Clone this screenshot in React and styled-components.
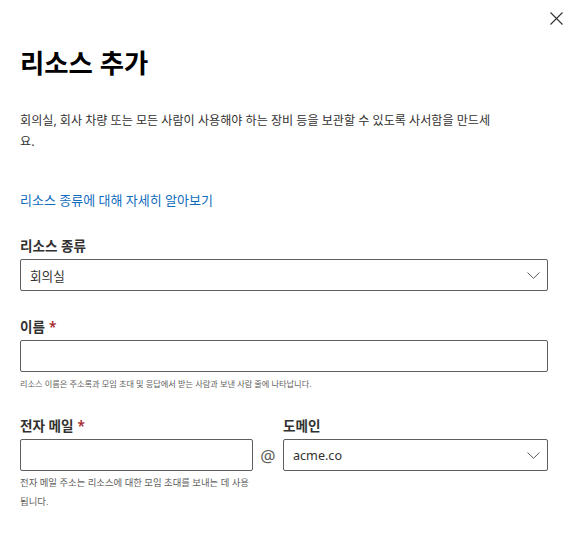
import React from 'react';
import styled, { createGlobalStyle } from 'styled-components';

const GlobalStyle = createGlobalStyle`
  * { box-sizing: border-box; }
  body {
    margin: 0;
    background: #fff;
    font-family: "Noto Sans", "Noto Sans CJK KR", sans-serif;
    color: #323130;
  }
`;

const Panel = styled.div`
  width: 571px;
  min-height: 534px;
  background: #fff;
`;

const CloseRow = styled.div`
  display: flex;
  justify-content: flex-end;
  padding-top: 3px;
`;

const CloseButton = styled.button`
  width: 30px;
  height: 30px;
  display: flex;
  align-items: center;
  justify-content: center;
  border: 0;
  padding: 0;
  background: transparent;
  cursor: pointer;
`;

const Body = styled.div`
  padding: 0 23px 0 20px;
`;

const Title = styled.h1`
  margin: 14px 0 0;
  font-size: 26.4px;
  line-height: 32px;
  font-weight: 700;
  color: #000;
`;

const Description = styled.p`
  margin: 31px 0 0;
  max-width: 477px;
  font-size: 12.1px;
  line-height: 21px;
  color: #323130;
`;

const LearnLink = styled.a`
  display: block;
  margin-top: 38px;
  font-size: 13px;
  line-height: 20px;
  color: #0f6cbd;
  text-decoration: none;
`;

const Form = styled.div`
  display: flex;
  flex-direction: column;
  gap: 25px;
  margin-top: 25px;
`;

const Field = styled.div`
  display: flex;
  flex-direction: column;
  gap: 3px;
  width: ${p => p.$width || 'auto'};
  flex: ${p => (p.$grow ? 1 : 'none')};
`;

const Label = styled.label`
  font-size: 13.6px;
  line-height: 21px;
  font-weight: 600;
  color: #323130;
`;

const Required = styled.span`
  color: #a4262c;
  margin-left: 4px;
`;

const Box = styled.div`
  height: 32px;
  border: 1px solid #605e5c;
  border-radius: 2px;
  display: flex;
  align-items: center;
  justify-content: space-between;
  padding: 0 7px 0 9px;
  font-size: 12.6px;
  color: #323130;
  background: #fff;
`;

const Help = styled.div`
  margin: -1px 0 -3px;
  font-size: ${p => p.$size || '8.2px'};
  line-height: 19px;
  color: #605e5c;
`;

const EmailRow = styled.div`
  display: flex;
  align-items: flex-start;
`;

const AtSign = styled.div`
  width: 30px;
  height: 32px;
  margin-top: 24px;
  display: flex;
  align-items: center;
  justify-content: center;
  font-size: 17px;
  color: #605e5c;
`;

const Chevron = () => (
  <svg width="13" height="7" viewBox="0 0 13 7" fill="none">
    <path d="M0.5 0.5 L6.5 6.3 L12.5 0.5" stroke="#605e5c" strokeWidth="1" />
  </svg>
);

const CloseIcon = () => (
  <svg width="13" height="13" viewBox="0 0 13 13" fill="none">
    <path d="M0.5 0.5 L12.5 12.5 M12.5 0.5 L0.5 12.5" stroke="#323130" strokeWidth="1.1" />
  </svg>
);

export default function App() {
  return (
    <Panel>
      <GlobalStyle />
      <CloseRow>
        <CloseButton aria-label="닫기"><CloseIcon /></CloseButton>
      </CloseRow>
      <Body>
        <Title>리소스 추가</Title>
        <Description>
          회의실, 회사 차량 또는 모든 사람이 사용해야 하는 장비 등을 보관할 수 있도록 사서함을 만드세요.
        </Description>
        <LearnLink href="#">리소스 종류에 대해 자세히 알아보기</LearnLink>
        <Form>
          <Field>
            <Label>리소스 종류</Label>
            <Box>
              <span>회의실</span>
              <Chevron />
            </Box>
          </Field>
          <Field>
            <Label>이름<Required>*</Required></Label>
            <Box />
            <Help>리소스 이름은 주소록과 모임 초대 및 응답에서 받는 사람과 보낸 사람 줄에 나타납니다.</Help>
          </Field>
          <EmailRow>
            <Field $width="233px">
              <Label>전자 메일<Required>*</Required></Label>
              <Box />
              <Help $size="9.4px">전자 메일 주소는 리소스에 대한 모임 초대를 보내는 데 사용됩니다.</Help>
            </Field>
            <AtSign>@</AtSign>
            <Field $grow>
              <Label>도메인</Label>
              <Box>
                <span>acme.co</span>
                <Chevron />
              </Box>
            </Field>
          </EmailRow>
        </Form>
      </Body>
    </Panel>
  );
}
